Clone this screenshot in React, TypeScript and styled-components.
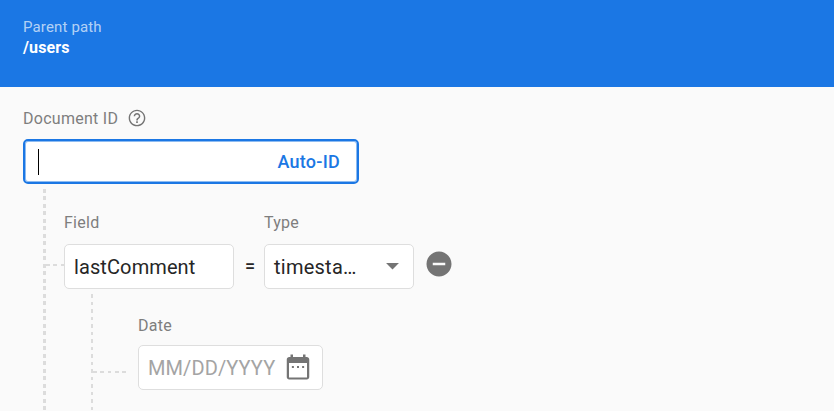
import React from "react";
import styled, { createGlobalStyle } from "styled-components";

const GlobalStyle = createGlobalStyle`
  *, *::before, *::after { box-sizing: border-box; }
  html, body { margin: 0; height: 100%; overflow: hidden; background: #fafafa; }
  body { font-family: Roboto, "Liberation Sans", sans-serif; color: #262626; }
`;

const Page = styled.div`
  height: 411px;
  overflow: hidden;
  display: flex;
  flex-direction: column;
`;

const Header = styled.header`
  flex: none;
  height: 87px;
  padding: 17px 23px 0;
  background: #1b77e4;
  color: #fff;
`;

const PathLabel = styled.div`
  font-size: 15px;
  line-height: 20px;
  letter-spacing: 0.15px;
  color: rgba(255, 255, 255, 0.68);
`;

const PathValue = styled.div`
  font-size: 16px;
  line-height: 22px;
  font-weight: 700;
  letter-spacing: 0.15px;
`;

const Body = styled.main`
  flex: 1;
  min-height: 0;
  padding: 22px 23px 0;
  display: flex;
  flex-direction: column;
`;

const Label = styled.label<{ $gap?: number }>`
  display: flex;
  align-items: center;
  gap: 9px;
  height: 20px;
  margin-bottom: ${(p) => p.$gap ?? 11}px;
  font-size: 16px;
  letter-spacing: 0.27px;
  line-height: 20px;
  color: #7e7e7e;
  white-space: nowrap;
`;

const Box = styled.div<{ $width: number }>`
  width: ${(p) => p.$width}px;
  height: 45px;
  flex: none;
  display: flex;
  align-items: center;
  padding: 1px 9px 0 9px;
  background: #fff;
  border: 1px solid #dedede;
  border-radius: 5px;
  font-size: 20px;
  letter-spacing: 0.1px;
  white-space: nowrap;
`;

const SelectBox = styled(Box)`
  padding-right: 5px;
  letter-spacing: 0.25px;
`;

const FocusedBox = styled(Box)`
  padding: 0 17px 0 12px;
  justify-content: space-between;
  border: 2px solid #1b77e4;
  box-shadow: inset 0 0 0 1px #8dbbf1;
`;

const Caret = styled.span`
  width: 1px;
  height: 26px;
  margin-left: 1px;
  background: #000;
`;

const AutoId = styled.button`
  padding: 0;
  border: 0;
  background: none;
  color: #1b77e4;
  font: 500 18px/24px Roboto, sans-serif;
  letter-spacing: 0.25px;
`;

const Tree = styled.div`
  flex: 1;
  min-height: 0;
  display: flex;
`;

const Rail = styled.div<{ $left: number; $width: number }>`
  flex: none;
  width: ${(p) => p.$width}px;
  margin: 5px 0 0 ${(p) => p.$left}px;
  background: repeating-linear-gradient(#dcdcdc 0 3.75px, transparent 3.75px 7.5px);
`;

const Twig = styled.div<{ $top: number; $width: number; $gap?: number }>`
  flex: none;
  width: ${(p) => p.$width}px;
  height: 2px;
  margin: ${(p) => p.$top}px ${(p) => p.$gap ?? 0}px 0 0;
  background: repeating-linear-gradient(90deg, #dcdcdc 0 3.75px, transparent 3.75px 7.3px);
`;

const Branch = styled.div`
  display: flex;
  flex-direction: column;
  padding-top: 29px;
`;

const FieldRow = styled.div`
  display: flex;
  align-items: flex-end;
`;

const Equals = styled.span`
  width: 30px;
  height: 45px;
  line-height: 44px;
  padding-left: 2px;
  text-align: center;
  font-size: 18px;
  font-weight: 500;
`;

const RemoveButton = styled.button`
  display: flex;
  padding: 0;
  margin: 0 0 10px 10px;
  border: 0;
  background: none;
`;

const Value = styled.span`
  flex: 1;
`;

const Placeholder = styled(Value)`
  color: #a4a4a4;
`;

const Subtree = styled.div`
  flex: 1;
  display: flex;
`;

const DateField = styled.div`
  padding-top: 27px;
`;

const Icon = styled.svg<{ $size: number; $lift?: number }>`
  display: block;
  flex: none;
  width: ${(p) => p.$size}px;
  height: ${(p) => p.$size}px;
  margin-bottom: ${(p) => p.$lift ?? 0}px;
  fill: #747474;
`;

const HelpIcon = () => (
  <Icon $size={20} $lift={2} viewBox="0 0 24 24">
    <path d="M11 18h2v-2h-2v2zm1-16C6.48 2 2 6.48 2 12s4.48 10 10 10 10-4.48 10-10S17.52 2 12 2zm0 18.3c-4.58 0-8.3-3.72-8.3-8.3s3.72-8.3 8.3-8.3 8.3 3.72 8.3 8.3-3.72 8.3-8.3 8.3zM12 6c-2.21 0-4 1.79-4 4h1.8c0-1.2 1-2.2 2.2-2.2s2.2 1 2.2 2.2c0 2-3.1 1.75-3.1 5h1.8c0-2.25 3.1-2.5 3.1-5 0-2.21-1.79-4-4-4z" />
  </Icon>
);

const ArrowIcon = () => (
  <Icon $size={31} $lift={3} viewBox="0 0 24 24">
    <path d="M7 10l5 5 5-5z" />
  </Icon>
);

const RemoveIcon = () => (
  <Icon $size={30} viewBox="0 0 24 24">
    <path d="M12 2C6.48 2 2 6.48 2 12s4.48 10 10 10 10-4.48 10-10S17.52 2 12 2zm5 11H7v-2h10v2z" />
  </Icon>
);

const CalendarIcon = () => (
  <Icon $size={30} $lift={3} viewBox="0 0 24 24">
    <path d="M8.7 11.1H7.1v1.6h1.6v-1.6zm4.1 0h-1.6v1.6h1.6v-1.6zm4.1 0h-1.6v1.6h1.6v-1.6zM19 4h-1V2h-2v2H8V2H6v2H5c-1.11 0-1.99.9-1.99 2L3 20c0 1.1.89 2 2 2h14c1.1 0 2-.9 2-2V6c0-1.1-.9-2-2-2zm.2 16.3H4.8V8.8h14.4v11.5z" />
  </Icon>
);

export default function App() {
  return (
    <Page>
      <GlobalStyle />
      <Header>
        <PathLabel>Parent path</PathLabel>
        <PathValue>/users</PathValue>
      </Header>
      <Body>
        <Label $gap={10}>
          Document ID
          <HelpIcon />
        </Label>
        <FocusedBox $width={336}>
          <Caret />
          <AutoId>Auto-ID</AutoId>
        </FocusedBox>
        <Tree>
          <Rail $left={20} $width={3} />
          <Twig $top={80} $width={18} />
          <Branch>
            <FieldRow>
              <div>
                <Label>Field</Label>
                <Box $width={170}>
                  <Value>lastComment</Value>
                </Box>
              </div>
              <Equals>=</Equals>
              <div>
                <Label>Type</Label>
                <SelectBox $width={150}>
                  <Value>timesta…</Value>
                  <ArrowIcon />
                </SelectBox>
              </div>
              <RemoveButton aria-label="Remove field">
                <RemoveIcon />
              </RemoveButton>
            </FieldRow>
            <Subtree>
              <Rail $left={27} $width={2} />
              <Twig $top={82} $width={33} $gap={12} />
              <DateField>
                <Label $gap={9}>Date</Label>
                <Box $width={185}>
                  <Placeholder>MM/DD/YYYY</Placeholder>
                  <CalendarIcon />
                </Box>
              </DateField>
            </Subtree>
          </Branch>
        </Tree>
      </Body>
    </Page>
  );
}
